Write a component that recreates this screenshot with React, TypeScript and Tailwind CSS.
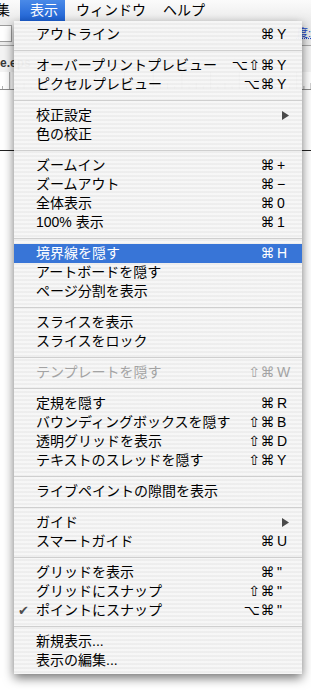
import React from 'react';

type MenuItem =
  | 'sep'
  | {
      label: string;
      mods?: string;
      keyChar?: string;
      sub?: boolean;
      disabled?: boolean;
      checked?: boolean;
      selected?: boolean;
    };

const items: MenuItem[] = [
  { label: 'アウトライン', mods: '⌘', keyChar: 'Y' },
  'sep',
  { label: 'オーバープリントプレビュー', mods: '⌥⇧⌘', keyChar: 'Y' },
  { label: 'ピクセルプレビュー', mods: '⌥⌘', keyChar: 'Y' },
  'sep',
  { label: '校正設定', sub: true },
  { label: '色の校正' },
  'sep',
  { label: 'ズームイン', mods: '⌘', keyChar: '+' },
  { label: 'ズームアウト', mods: '⌘', keyChar: '−' },
  { label: '全体表示', mods: '⌘', keyChar: '0' },
  { label: '100% 表示', mods: '⌘', keyChar: '1' },
  'sep',
  { label: '境界線を隠す', mods: '⌘', keyChar: 'H', selected: true },
  { label: 'アートボードを隠す' },
  { label: 'ページ分割を表示' },
  'sep',
  { label: 'スライスを表示' },
  { label: 'スライスをロック' },
  'sep',
  { label: 'テンプレートを隠す', mods: '⇧⌘', keyChar: 'W', disabled: true },
  'sep',
  { label: '定規を隠す', mods: '⌘', keyChar: 'R' },
  { label: 'バウンディングボックスを隠す', mods: '⇧⌘', keyChar: 'B' },
  { label: '透明グリッドを表示', mods: '⇧⌘', keyChar: 'D' },
  { label: 'テキストのスレッドを隠す', mods: '⇧⌘', keyChar: 'Y' },
  'sep',
  { label: 'ライブペイントの隙間を表示' },
  'sep',
  { label: 'ガイド', sub: true },
  { label: 'スマートガイド', mods: '⌘', keyChar: 'U' },
  'sep',
  { label: 'グリッドを表示', mods: '⌘', keyChar: '"' },
  { label: 'グリッドにスナップ', mods: '⇧⌘', keyChar: '"' },
  { label: 'ポイントにスナップ', mods: '⌥⌘', keyChar: '"', checked: true },
  'sep',
  { label: '新規表示...' },
  { label: '表示の編集...' },
];

// ruler ticks of the document window behind the menu
function Ruler() {
  const marks = Array.from({ length: 13 }, (_, i) => i);
  return (
    <svg width="311" height="18" className="block">
      {marks.map(i => {
        const x = -19 + i * 28.7;
        return (
          <g key={i}>
            <line x1={x} y1="0" x2={x} y2="18" stroke="#9a9a9a" />
            <line x1={x + 14.35} y1="11" x2={x + 14.35} y2="18" stroke="#9a9a9a" />
            <line x1={x + 7.2} y1="14" x2={x + 7.2} y2="18" stroke="#b0b0b0" />
            <line x1={x + 21.5} y1="14" x2={x + 21.5} y2="18" stroke="#b0b0b0" />
          </g>
        );
      })}
      <line x1="0" y1="17.5" x2="311" y2="17.5" stroke="#8c8c8c" />
    </svg>
  );
}

function SubArrow({ white }: { white?: boolean }) {
  return (
    <svg width="7" height="9" viewBox="0 0 7 9" className="ml-auto">
      <polygon points="0,0 7,4.5 0,9" fill={white ? '#fff' : '#4a4a4a'} />
    </svg>
  );
}

export default function App() {
  return (
    <div className="relative w-[311px] h-[690px] overflow-hidden bg-white font-['Liberation_Sans','Noto_Sans_CJK_JP',sans-serif] text-black">
      {/* Menu bar */}
      <div className="flex h-[21px] items-center bg-[linear-gradient(#fbfbfb,#ececec)] text-[14px] leading-[21px] whitespace-nowrap">
        <span className="-ml-[18px] pr-[10px]">編集</span>
        <span className="h-[21px] w-[45px] pl-[10px] bg-[linear-gradient(#4a8ae8,#1d61d4)] text-white">表示</span>
        <span className="pl-[11px]">ウィンドウ</span>
        <span className="pl-[17px]">ヘルプ</span>
      </div>

      {/* Document window behind the menu */}
      <div className="flex h-[25px] items-center justify-between border-b border-[#a9a9a9] bg-[#ececec]">
        <div className="h-[17px] w-[12px] border border-l-0 border-[#9d9d9d] bg-white" />
        <span className="pl-[2px] text-[11px] text-[#2448c9] underline decoration-dotted">度:</span>
      </div>
      <div className="flex h-[26px] items-end bg-[#f4f4f4] pb-[1px]">
        <span className="text-[12px] font-bold leading-[16px] text-[#3a3a3a]">e.eps</span>
      </div>
      <Ruler />
      <div className="h-[60px]" />
      <div className="h-px bg-[#222]" />

      {/* Dropdown menu */}
      <div className="absolute left-[14px] top-[21px] w-[288px] py-[4px] bg-[repeating-linear-gradient(180deg,rgba(246,246,246,0.96)_0px,rgba(246,246,246,0.96)_2px,rgba(237,237,237,0.96)_2px,rgba(237,237,237,0.96)_4px)] shadow-[0_4px_10px_rgba(0,0,0,0.55)] text-[14px] leading-[19px]">
        {items.map((item, i) => {
          if (item === 'sep') {
            return (
              <div key={i} className="flex h-[12px] items-center">
                <div className="h-px w-full bg-[#cfcfcf]" />
              </div>
            );
          }
          return (
            <div
              key={i}
              className={`relative flex h-[19px] items-center pl-[22px] pr-[13px] whitespace-nowrap ${
                item.selected ? 'bg-[#3875d7] text-white' : item.disabled ? 'text-[#a3a3a3]' : ''
              }`}
            >
              {item.checked && (
                <span className="absolute left-[4px] top-0 font-['DejaVu_Sans',sans-serif] text-[13px] text-[#4d4d4d]">✔</span>
              )}
              <span>{item.label}</span>
              {item.sub && <SubArrow white={item.selected} />}
              {item.keyChar && (
                <div className="ml-auto flex">
                  <span className="font-['DejaVu_Sans',sans-serif] text-[14px] tracking-[0.5px]">{item.mods}</span>
                  <span className="w-[14px] pl-[2px]">{item.keyChar}</span>
                </div>
              )}
            </div>
          );
        })}
      </div>
    </div>
  );
}
